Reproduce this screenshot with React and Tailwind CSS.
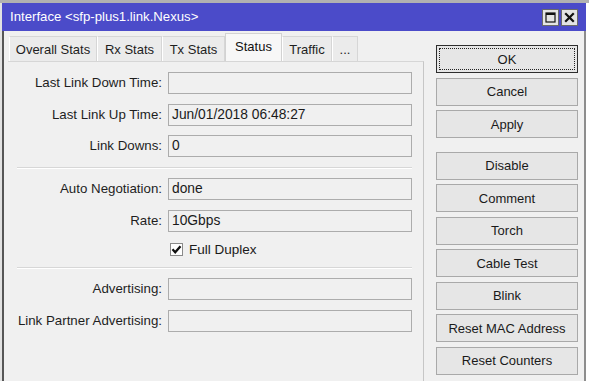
import React from 'react';

const TABS = [
  { label: 'Overall Stats', w: 'w-[88px]' },
  { label: 'Rx Stats', w: 'w-[65px]' },
  { label: 'Tx Stats', w: 'w-[63px]' },
  { label: 'Status', w: 'w-[57px]', active: true },
  { label: 'Traffic', w: 'w-[50px]' },
  { label: '...', w: 'w-[26px]' }
];

const BUTTONS = [
  'OK',
  'Cancel',
  'Apply',
  'Disable',
  'Comment',
  'Torch',
  'Cable Test',
  'Blink',
  'Reset MAC Address',
  'Reset Counters'
];

const Field = ({ label, value }) => (
  <div className="flex items-center h-[22px]">
    <div className="w-[154px] text-right whitespace-nowrap text-[#1e1e1e] text-[13.3px]">{label}</div>
    <div className="ml-[6px] w-[244px] h-[22px] border border-[#acacac] bg-[#f0f0f0] pl-[3px] flex items-center text-[#1a1a1a] text-[13.8px] whitespace-nowrap">
      {value}
    </div>
  </div>
);

const Separator = () => (
  <div className="ml-[9px] w-[395px] h-[2px] border-t border-[#d7d7d7] border-b border-b-white" />
);

export default function App() {
  return (
    <div
      className="w-[589px] h-[389px] bg-white overflow-hidden text-[13px] leading-none"
      style={{ fontFamily: '"Liberation Sans", Arial, sans-serif' }}
    >
      {/* strip above the window */}
      <div className="h-[3px] bg-[#b1b1b1]" />

      <div className="flex">
        <div className="w-[2px] h-[378px] bg-[#e2e2e2]" />

        {/* window */}
        <div className="w-[584px] h-[378px] flex flex-col">
          {/* title bar */}
          <div className="h-[28px] bg-[#4b4bc9] flex items-center pl-[8px] pr-[8px] text-white">
            <span className="flex-1 whitespace-nowrap text-[13.2px]">Interface &lt;sfp-plus1.link.Nexus&gt;</span>
            <div className="flex gap-[2px]">
              <div className="w-[17px] h-[17px] bg-[#e4e4e4] border border-[#6b6b6b] flex items-center justify-center">
                <svg width="11" height="11" viewBox="0 0 11 11">
                  <rect x="1" y="1" width="9" height="9" fill="none" stroke="#111" strokeWidth="1.2" />
                  <rect x="1" y="1" width="9" height="2" fill="#111" />
                </svg>
              </div>
              <div className="w-[17px] h-[17px] bg-[#e4e4e4] border border-[#6b6b6b] flex items-center justify-center">
                <svg width="11" height="11" viewBox="0 0 11 11">
                  <path d="M2 2 L9 9 M9 2 L2 9" stroke="#111" strokeWidth="2.2" strokeLinecap="square" />
                </svg>
              </div>
            </div>
          </div>

          {/* body */}
          <div className="flex-1 flex bg-[#f0f0f0] border-l-2 border-[#565656] border-r-2 border-r-[#8d8d8d]">
            {/* tabs + panel */}
            <div className="pl-[4px] flex flex-col">
              <div className="pt-[2px] h-[30px] flex items-end pl-[1px]">
                {TABS.map((t) =>
                  t.active ? (
                    <div
                      key={t.label}
                      className={`${t.w} h-[28px] bg-[#f7f7f7] border-x border-t border-[#d2d2d2] flex items-center justify-center pb-[2px] text-[#111]`}
                    >
                      {t.label}
                    </div>
                  ) : (
                    <div
                      key={t.label}
                      className={`${t.w} h-[25px] bg-[#ebebeb] border-r border-t border-[#d6d6d6] border-l border-l-white flex items-center justify-center text-[#1e1e1e]`}
                    >
                      {t.label}
                    </div>
                  )
                )}
              </div>

              <div className="w-[416px] flex-1 border-t border-[#d6d6d6] border-r border-r-[#c6c6c6] pt-[10px] flex flex-col">
                <div className="flex flex-col gap-[9.5px]">
                  <Field label="Last Link Down Time:" value="" />
                  <Field label="Last Link Up Time:" value="Jun/01/2018 06:48:27" />
                  <Field label="Link Downs:" value="0" />
                </div>

                <div className="mt-[10px]">
                  <Separator />
                </div>

                <div className="mt-[9px] flex flex-col gap-[9.5px]">
                  <Field label="Auto Negotiation:" value="done" />
                  <Field label="Rate:" value="10Gbps" />
                  <div className="h-[17px] flex items-center pl-[162px]">
                    <div className="w-[13px] h-[13px] bg-white border border-[#8a8a8a] flex items-center justify-center">
                      <svg width="11" height="11" viewBox="0 0 11 11">
                        <path d="M1.5 5.3 L4.2 8.2 L9.5 2.2" fill="none" stroke="#111" strokeWidth="2.3" />
                      </svg>
                    </div>
                    <span className="ml-[6px] text-[#1a1a1a] text-[13.5px]">Full Duplex</span>
                  </div>
                </div>

                <div className="mt-[9px]">
                  <Separator />
                </div>

                <div className="mt-[9px] flex flex-col gap-[9.5px]">
                  <Field label="Advertising:" value="" />
                  <Field label="Link Partner Advertising:" value="" />
                </div>
              </div>
            </div>

            {/* action buttons */}
            <div className="ml-[12px] pt-[14px] flex flex-col gap-[4.5px]">
              {BUTTONS.map((b) => (
                <div
                  key={b}
                  className={`w-[142px] h-[28px] shrink-0 flex items-center justify-center text-[#1a1a1a] bg-[#e6e6e6] border ${
                    b === 'OK'
                      ? 'border-[#2e2e2e] outline-1 outline-dotted outline-[#222] outline-offset-[-4px]'
                      : 'border-[#a9a9a9]'
                  } ${b === 'Disable' ? 'mt-[9px]' : ''}`}
                >
                  {b}
                </div>
              ))}
            </div>
          </div>
        </div>
      </div>
    </div>
  );
}
